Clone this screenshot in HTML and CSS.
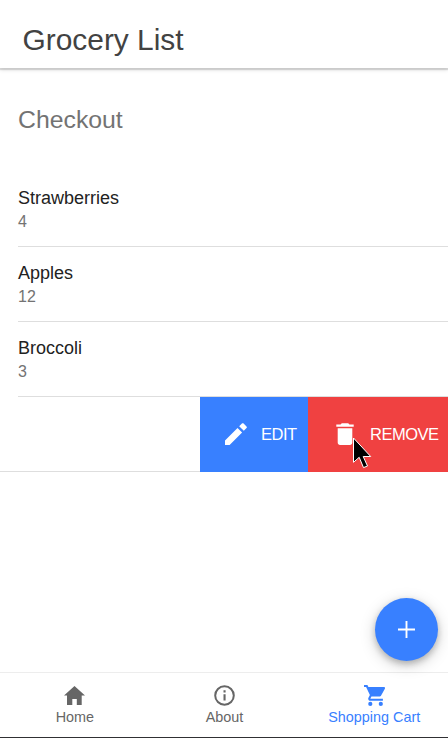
FILE: index.html
```html
<!DOCTYPE html>
<html lang="en">
<head>
<meta charset="utf-8">
<title>Grocery List</title>
<link rel="stylesheet" href="styles.css">
</head>
<body>
<div class="app">
  <header class="toolbar"><h1>Grocery List</h1></header>
  <main class="content">
    <h2>Checkout</h2>
    <div class="list">
      <div class="item"><div class="inner"><h3>Strawberries</h3><p>4</p></div></div>
      <div class="item"><div class="inner"><h3>Apples</h3><p>12</p></div></div>
      <div class="item"><div class="inner"><h3>Broccoli</h3><p>3</p></div></div>
      <div class="item sliding">
        <div class="options">
          <button class="option edit">
            <svg viewBox="0 0 22 22"><path d="M0 17.4V22h4.6L17.1 9.500l-4.600-4.600zM21.500 5.100c.5-.5.5-1.200 0-1.700L18.600.5c-.5-.5-1.200-.5-1.700 0l-2.700 2.700 4.600 4.600z"/></svg>
            <span>EDIT</span>
          </button>
          <button class="option remove">
            <svg viewBox="0 0 22 22"><path d="M3.700 19.600C3.700 20.900 4.700 22 6 22h10c1.300 0 2.300-1.100 2.300-2.400V5.200H3.700zM19.700 1.600h-4.200L14.200.3H7.800L6.500 1.600H2.300v2.200h17.400z"/></svg>
            <span>REMOVE</span>
          </button>
        </div>
      </div>
    </div>
  </main>
  <nav class="tabs">
    <a class="tab"><svg viewBox="0 0 21 21"><path d="M8.300 20v-6h4.500v6h4.900v-9.500H21L10.500 1 0 10.500h3V20z"/></svg><span>Home</span></a>
    <a class="tab"><svg viewBox="0 0 21 21"><circle cx="10.500" cy="10.500" r="9.300" fill="none" stroke="currentColor" stroke-width="2"/><path d="M9.500 5.300h2.100v2.100H9.500zM9.500 9.300h2.100v6.300H9.500z"/></svg><span>About</span></a>
    <a class="tab active"><svg viewBox="1 2 20 20"><path d="M7 18a2 2 0 1 0 0 4 2 2 0 0 0 0-4zM1 2v2h2l3.600 7.590-1.350 2.450C4.520 15.370 5.480 17 7 17h12v-2H7.420c-.14 0-.25-.11-.25-.25l.03-.12.9-1.630h7.450c.75 0 1.410-.41 1.750-1.030l3.580-6.490C21.250 4.820 20.760 4 20 4H5.210l-.94-2zM17 18a2 2 0 1 0 0 4 2 2 0 0 0 0-4z"/></svg><span>Shopping Cart</span></a>
  </nav>
  <button class="fab" aria-label="Add"><svg viewBox="0 0 18 18"><path d="M8 0h2v8h8v2h-8v8H8v-8H0V8h8z"/></svg></button>
  <svg class="cursor" viewBox="0 0 18 32"><path d="M.5 1v24.300l5.700-5 4.300 10.300 4-1.600-4.300-9.500h7.500z"/></svg>
</div>
</body>
</html>
```
FILE: styles.css
```css
* { box-sizing: border-box; }
body, h1, h2, h3, p { margin: 0; font-weight: 400; }
body { font-family: "Liberation Sans", Arial, sans-serif; background: #fff; }
svg { display: block; fill: currentColor; }
button { border: 0; padding: 0; font: inherit; color: #fff; }

.app {
  position: relative;
  display: flex;
  flex-direction: column;
  height: 738px;
  overflow: hidden;
  border-bottom: 1px solid #303033;
}
.toolbar {
  height: 68px;
  padding: 6px 22.5px 0;
  box-shadow: 0 2px 1px rgba(0, 0, 0, .12), 0 2px 4px rgba(0, 0, 0, .12);
}
.toolbar h1 { font-size: 29.9px; line-height: 68px; color: #424242; }
.content { flex: 1; padding-top: 37px; }
.content h2 { padding-left: 18px; font-size: 24.8px; line-height: 30px; color: #737373; }
.list { margin-top: 37px; }
.item { height: 75px; padding-left: 18px; }
.inner { height: 75px; padding-top: 15px; border-bottom: 1px solid #dedede; }
.inner h3 { font-size: 18px; line-height: 22px; color: #222; }
.inner p { margin-top: 3px; font-size: 16px; line-height: 20px; color: #737373; }
.sliding { padding: 0; border-bottom: 1px solid #dedede; }
.options { display: flex; justify-content: flex-end; height: 75px; }
.option { display: flex; align-items: center; padding-bottom: 1px; font-size: 16.5px; letter-spacing: -.5px; }
.option svg { width: 22px; height: 22px; }
.edit { width: 108px; padding-left: 25px; gap: 14px; background: #3880ff; }
.remove { width: 140px; padding-left: 26px; gap: 14px; background: #f04141; }

.tabs { display: flex; width: 449px; height: 65px; border-top: 1px solid #ededed; background: #fff; }
.tab {
  flex: 1 1 0;
  display: flex;
  flex-direction: column;
  align-items: center;
  padding-top: 12px;
  color: #666;
  font-size: 14.4px;
  line-height: 18px;
}
.tab svg { width: 21px; height: 21px; }
.tab span { margin-top: 2px; white-space: nowrap; }
.active { color: #3880ff; }

.fab {
  position: absolute;
  left: 375px;
  top: 598px;
  display: grid;
  place-items: center;
  width: 63px;
  height: 63px;
  border-radius: 50%;
  background: #3880ff;
  box-shadow: 0 3px 6px rgba(0, 0, 0, .22), 0 4px 16px rgba(0, 0, 0, .18);
}
.fab svg { width: 17px; height: 17px; }
.cursor {
  position: absolute;
  left: 353px;
  top: 437px;
  width: 18px;
  height: 32px;
  fill: #000;
  stroke: #fff;
  stroke-width: 1;
  overflow: visible;
}
```
